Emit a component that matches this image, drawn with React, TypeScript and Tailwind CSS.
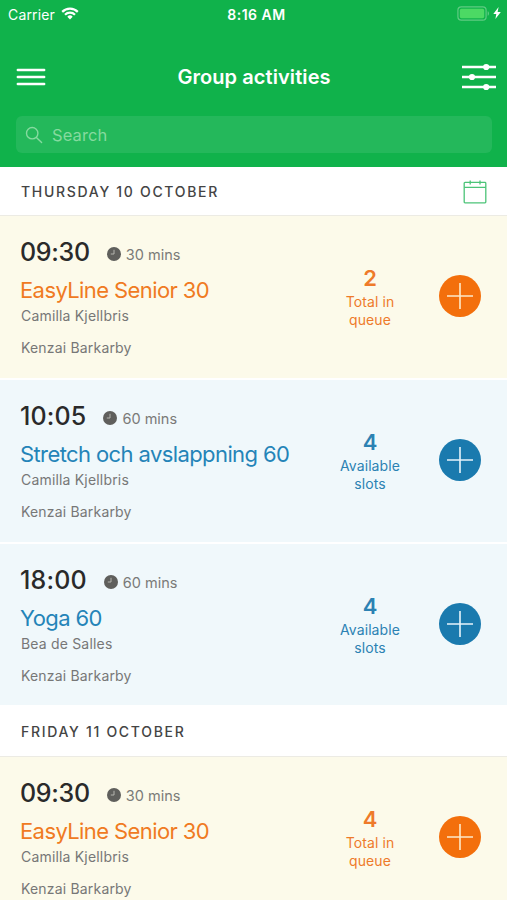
import clsx from 'clsx'

type Tone = 'queue' | 'available'

interface Activity {
  id: string
  time: string
  duration: string
  name: string
  instructor: string
  location: string
  count: number
  tone: Tone
}

interface ActivityDay {
  label: string
  activities: Activity[]
}

const days: ActivityDay[] = [
  {
    label: 'Thursday 10 October',
    activities: [
      { id: '1', time: '09:30', duration: '30 mins', name: 'EasyLine Senior 30', instructor: 'Camilla Kjellbris', location: 'Kenzai Barkarby', count: 2, tone: 'queue' },
      { id: '2', time: '10:05', duration: '60 mins', name: 'Stretch och avslappning 60', instructor: 'Camilla Kjellbris', location: 'Kenzai Barkarby', count: 4, tone: 'available' },
      { id: '3', time: '18:00', duration: '60 mins', name: 'Yoga 60', instructor: 'Bea de Salles', location: 'Kenzai Barkarby', count: 4, tone: 'available' },
    ],
  },
  {
    label: 'Friday 11 October',
    activities: [
      { id: '4', time: '09:30', duration: '30 mins', name: 'EasyLine Senior 30', instructor: 'Camilla Kjellbris', location: 'Kenzai Barkarby', count: 4, tone: 'queue' },
    ],
  },
]

function StatusBar() {
  return (
    <div className="grid h-7 grid-cols-3 items-center pr-[6px] pl-[8px] text-[14px] text-white">
      <div className="flex items-center gap-[6px]">
        <span className="tracking-[0.15px]">Carrier</span>
        <svg viewBox="0 0 18 13" className="mb-px h-[13px] w-[18px]" fill="none" stroke="currentColor" strokeWidth="2.2">
          <path d="M1.2 4.9a11 11 0 0 1 15.6 0" />
          <path d="M4 7.8a7 7 0 0 1 10 0" />
          <path d="M9 12.4 6.3 9.7a3.8 3.8 0 0 1 5.4 0Z" fill="currentColor" stroke="none" />
        </svg>
      </div>
      <span className="pl-1 text-center font-semibold tracking-[0.5px] whitespace-nowrap">8:16 AM</span>
      <div className="mb-[2px] flex items-center justify-end gap-[3px]">
        <svg viewBox="0 0 33 15" className="h-[15px] w-[33px]">
          <rect x="0.9" y="0.9" width="28.2" height="13.2" rx="3.4" fill="none" stroke="#5fcb83" strokeWidth="1.2" />
          <rect x="2.8" y="2.8" width="24.4" height="9.4" rx="1.6" fill="#4cd964" />
          <path d="M30.7 5.2c1.7.5 1.7 4.1 0 4.6Z" fill="#5fcb83" />
        </svg>
        <svg viewBox="0 0 8 12" className="h-3 w-2" fill="currentColor">
          <path d="M5.6 0 .3 6.9h3L2.4 12 7.8 4.9H4.6Z" />
        </svg>
      </div>
    </div>
  )
}

function Header() {
  return (
    <header className="h-[167px] bg-[#10b24b]">
      <StatusBar />
      <div className="flex h-[88px] items-center justify-between pt-[10px] pr-[11px] pl-4 text-white">
        <button type="button" aria-label="Menu" className="w-[30px]">
          <svg viewBox="0 0 30 20" className="h-5 w-[30px]" stroke="currentColor" strokeWidth="2.4" strokeLinecap="round">
            <path d="M1.8 3h26.4M1.8 10h26.4M1.8 17h26.4" />
          </svg>
        </button>
        <h1 className="text-[20px] font-semibold tracking-[0.08px]">Group activities</h1>
        <button type="button" aria-label="Filter">
          <svg viewBox="0 0 34 28" className="h-7 w-[34px]" fill="currentColor">
            <path d="M0 2.8h34v2.4H0zM0 12.8h34v2.4H0zM0 22.8h34v2.4H0z" />
            <circle cx="24.2" cy="4" r="3.1" />
            <circle cx="10" cy="14" r="3.1" />
            <circle cx="24.2" cy="24" r="3.1" />
          </svg>
        </button>
      </div>
      <div className="mr-[15px] ml-4 flex h-[37px] items-center gap-[9px] rounded-md bg-[#24b85b] pl-[9px] text-[#85da9f]">
        <svg viewBox="0 0 18 18" className="size-[18px]" fill="none" stroke="currentColor" strokeWidth="1.4" strokeLinecap="round">
          <circle cx="7.2" cy="7.2" r="5.7" />
          <path d="m11.4 11.4 5.2 5.2" />
        </svg>
        <span className="pt-0.5 text-[16.5px] tracking-[0.1px]">Search</span>
      </div>
    </header>
  )
}

function CalendarIcon() {
  return (
    <svg viewBox="0 0 24 24" className="mt-px size-6" fill="none" stroke="#4cc478" strokeWidth="1.3">
      <rect x="1.2" y="2.4" width="21.6" height="20.4" rx="0.8" />
      <path d="M1.2 7.4h21.6M7.2 0.4v4M17 0.4v4" />
    </svg>
  )
}

function DayHeader({ label, first }: { label: string; first: boolean }) {
  return (
    <div
      className={clsx(
        'flex items-center justify-between border-b border-[#ecebe4] bg-white pr-5 pl-[21px]',
        first ? 'h-[49px]' : 'h-[52px] pt-[2px]',
      )}
    >
      <h2 className="text-[14px] font-medium tracking-[1.7px] text-[#444] uppercase">{label}</h2>
      {first && <CalendarIcon />}
    </div>
  )
}

function ActivityRow({ activity }: { activity: Activity }) {
  const queue = activity.tone === 'queue'

  return (
    <li
      className={clsx(
        'flex h-[164px] border-b-2 border-white pr-[26px] pl-[21px] last:h-[161px] last:border-b-0',
        queue ? 'bg-[#fcfaea]' : 'bg-[#f0f8fb]',
      )}
    >
      <div className="flex-1 pt-5">
        <div className="flex h-8 items-center">
          <span
            className={clsx(
              '-ml-px pt-px text-[25px] font-medium text-[#2a2a2a]',
              queue ? 'tracking-[-0.3px]' : 'tracking-[0.15px]',
            )}
          >
            {activity.time}
          </span>
          <svg viewBox="0 0 14 14" className="mt-1 ml-[17px] size-[14px]">
            <circle cx="7" cy="7" r="7" fill="#5f5f5c" />
            <path d="M7 2.8V7H3.8" fill="none" stroke="#b5b5ae" strokeWidth="1" />
          </svg>
          <span className="mt-1.5 ml-[5px] text-[14.5px] text-[#7a7a78]">{activity.duration}</span>
        </div>
        <h3
          className={clsx(
            'mt-[7px] -ml-px text-[22px] leading-[30px] tracking-[-0.6px] whitespace-nowrap',
            queue ? 'text-[#f07a22]' : 'text-[#2484b8]',
          )}
        >
          {activity.name}
        </h3>
        <p className="mt-px text-[14px] leading-5 tracking-[0.18px] text-[#777]">{activity.instructor}</p>
        <p className="mt-3 text-[14px] leading-5 tracking-[0.18px] text-[#777]">{activity.location}</p>
      </div>
      <div
        className={clsx(
          'mt-[48px] w-20 text-center',
          queue ? 'text-[#ee7a2a]' : 'text-[#2c82b3]',
        )}
      >
        <p className="text-[22px] leading-7 font-semibold">{activity.count}</p>
        <p className="mt-px text-[14px] leading-[18px] tracking-[0.1px]">
          {queue ? 'Total in' : 'Available'}
          <br />
          {queue ? 'queue' : 'slots'}
        </p>
      </div>
      <button
        type="button"
        aria-label={`Book ${activity.name}`}
        className={clsx(
          'mt-[59px] ml-[29px] flex size-[42px] items-center justify-center rounded-full',
          queue ? 'bg-[#f36f0c] text-[#fde9c9]' : 'bg-[#1a7aae] text-[#e6f4fb]',
        )}
      >
        <svg viewBox="0 0 26 26" className="size-[26px]" stroke="currentColor" strokeWidth="1.6">
          <path d="M13 0v26M0 13h26" />
        </svg>
      </button>
    </li>
  )
}

export default function App() {
  return (
    <div className="h-[900px] overflow-hidden bg-white font-['Inter',sans-serif]">
      <Header />
      {days.map((day, i) => (
        <section key={day.label}>
          <DayHeader label={day.label} first={i === 0} />
          <ul>
            {day.activities.map((activity) => (
              <ActivityRow key={activity.id} activity={activity} />
            ))}
          </ul>
        </section>
      ))}
    </div>
  )
}
